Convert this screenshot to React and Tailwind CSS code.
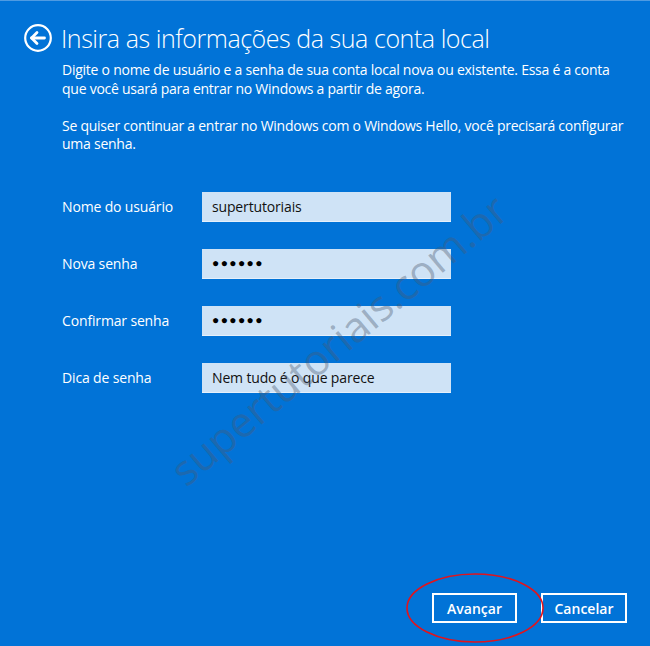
import React from 'react';

const fields = [
  { label: 'Nome do usuário', value: 'supertutoriais' },
  { label: 'Nova senha', value: '●●●●●●', secret: true },
  { label: 'Confirmar senha', value: '●●●●●●', secret: true },
  { label: 'Dica de senha', value: 'Nem tudo é o que parece' },
];

const BackIcon = () => (
  <svg width="28" height="28" viewBox="0 0 28 28" fill="none">
    <circle cx="14" cy="14" r="12.8" stroke="white" strokeWidth="2.2" />
    <path d="M7.5 14 H20.5" stroke="white" strokeWidth="2.8" strokeLinecap="round" />
    <path d="M13 8.6 L7.6 14 L13 19.4" stroke="white" strokeWidth="2.8" strokeLinecap="round" strokeLinejoin="round" />
  </svg>
);

const App = () => {
  return (
    <div className="relative w-[650px] h-[646px] overflow-hidden bg-[#0173d7] border-t border-[#4f9be2] font-['Open_Sans','Noto_Sans',sans-serif] text-white flex flex-col">
      {/* header */}
      <div className="flex items-center gap-[9px] pl-[24px] pt-[22px]">
        <BackIcon />
        <h1 className="text-[25px] font-light leading-[30px] tracking-[-0.45px]">Insira as informações da sua conta local</h1>
      </div>

      <div className="pl-[62px] pr-[20px] mt-[8px] text-[14px] leading-[18.5px] tracking-[-0.25px] flex flex-col gap-[18.5px]">
        <p>Digite o nome de usuário e a senha de sua conta local nova ou existente. Essa é a conta que você usará para entrar no Windows a partir de agora.</p>
        <p>Se quiser continuar a entrar no Windows com o Windows Hello, você precisará configurar uma senha.</p>
      </div>

      <div className="grid grid-cols-[140px_249px] gap-y-[27px] pl-[62px] mt-[38px] text-[14px] tracking-[-0.15px]">
        {fields.map((f) => (
          <React.Fragment key={f.label}>
            <div className="flex items-center h-[30px]">{f.label}</div>
            <div className="flex items-center h-[30px] bg-[#cfe3f6] border-b border-[#e6f0fb] pl-[10px] text-[#111]">
              {f.secret ? (
                <span className="text-[12px] tracking-[1.4px] leading-none text-black">{f.value}</span>
              ) : (
                f.value
              )}
            </div>
          </React.Fragment>
        ))}
      </div>

      <div className="mt-auto flex justify-end gap-[24px] pr-[23px] pb-[23px]">
        <button className="w-[85px] h-[30px] border-2 border-white text-[14px] font-semibold text-white">Avançar</button>
        <button className="w-[86px] h-[30px] border-2 border-white text-[14px] font-semibold text-white">Cancelar</button>
      </div>

      {/* watermark */}
      <div className="absolute left-[338px] top-[338px] -translate-x-1/2 -translate-y-1/2 -rotate-[40deg] whitespace-nowrap text-[42px] text-[#4a5a70]/40 pointer-events-none">
        supertutoriais.com.br
      </div>

      {/* red highlight */}
      <svg className="absolute left-[405px] top-[571px] pointer-events-none" width="140" height="72" viewBox="0 0 140 72">
        <ellipse cx="70" cy="36" rx="68" ry="34" fill="none" stroke="#e2141c" strokeWidth="1.6" />
      </svg>
    </div>
  );
};

export default App;
